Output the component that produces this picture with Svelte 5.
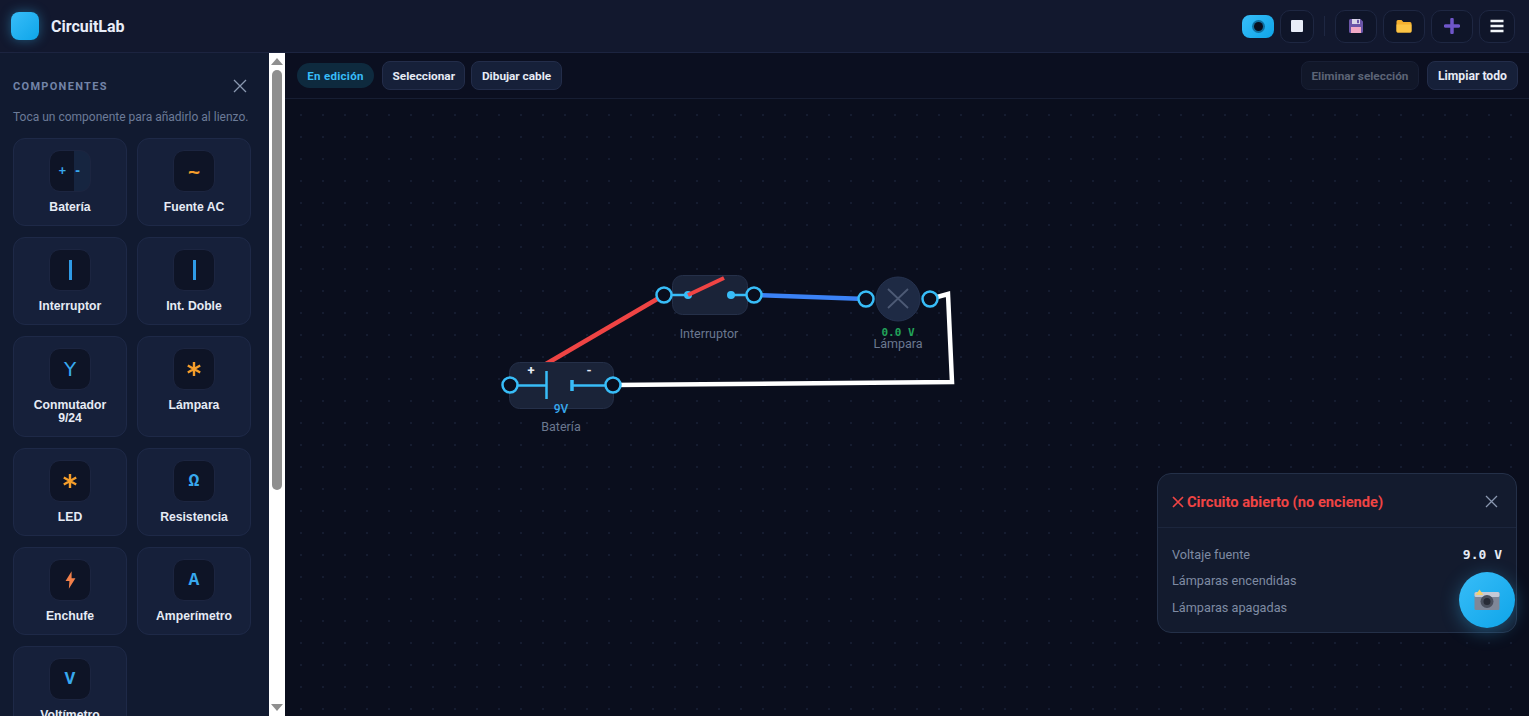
<script lang="ts">
  const components = [
    { name: 'Batería', glyph: 'battery' },
    { name: 'Fuente AC', glyph: '~', tone: 'amber' },
    { name: 'Interruptor', glyph: 'bar' },
    { name: 'Int. Doble', glyph: 'bar' },
    { name: 'Conmutador 9/24', glyph: 'Y', tone: 'blue', wide: true },
    { name: 'Lámpara', glyph: 'star' },
    { name: 'LED', glyph: 'star' },
    { name: 'Resistencia', glyph: 'Ω', tone: 'blue' },
    { name: 'Enchufe', glyph: 'bolt' },
    { name: 'Amperímetro', glyph: 'A', tone: 'blue' },
    { name: 'Voltímetro', glyph: 'V', tone: 'blue' },
  ];

  const terminals = [
    [379, 196], [469, 196], [581, 200], [645, 200], [225, 286], [328, 286],
  ];
</script>

<div class="app">
  <header class="topbar">
    <div class="brand">
      <span class="logo"></span>
      <span class="brand-name">CircuitLab</span>
    </div>
    <div class="actions">
      <button class="mode-toggle" aria-label="Modo"><span class="lens"></span></button>
      <button class="icon-btn stop" aria-label="Detener"><span class="square"></span></button>
      <span class="divider"></span>
      <button class="icon-btn wide" aria-label="Guardar">
        <svg width="16" height="16" viewBox="0 0 16 16">
          <path d="M1 2.500A1.500 1.500 0 0 1 2.500 1h10L15 3.500v10a1.500 1.500 0 0 1-1.500 1.500h-11A1.500 1.500 0 0 1 1 13.500z" fill="#6b55a8" />
          <rect x="4" y="1" width="8" height="5" fill="#d9d6e8" />
          <rect x="9" y="1.800" width="2" height="3.400" fill="#6b55a8" />
          <rect x="3" y="9" width="10" height="6" fill="#f2a9c6" />
        </svg>
      </button>
      <button class="icon-btn wide" aria-label="Abrir">
        <svg width="18" height="18" viewBox="0 0 18 18">
          <path d="M1.500 4.500A1.500 1.500 0 0 1 3 3h3.500l1.800 2H15a1.500 1.500 0 0 1 1.500 1.500V14a1.500 1.500 0 0 1-1.500 1.500H3A1.500 1.500 0 0 1 1.500 14z" fill="#f5b02f" />
          <path d="M1.500 7.500h15V14a1.500 1.500 0 0 1-1.500 1.500H3A1.500 1.500 0 0 1 1.500 14z" fill="#fcc445" />
        </svg>
      </button>
      <button class="icon-btn wide" aria-label="Nuevo">
        <svg width="16" height="16" viewBox="0 0 16 16">
          <path d="M8 1.500v13M1.500 8h13" stroke="#6f56c9" stroke-width="3.500" stroke-linecap="round" />
        </svg>
      </button>
      <button class="icon-btn menu" aria-label="Menú">
        <svg width="14" height="14" viewBox="0 0 14 14">
          <path d="M0.500 2h13M0.500 7h13M0.500 12h13" stroke="#f1f5f9" stroke-width="2.300" />
        </svg>
      </button>
    </div>
  </header>

  <div class="workspace">
    <aside class="sidebar">
      <div class="side-head">
        <h2>COMPONENTES</h2>
        <svg width="14" height="14" viewBox="0 0 14 14">
          <path d="M1 1l12 12M13 1L1 13" stroke="#8a97b0" stroke-width="1.300" />
        </svg>
      </div>
      <p class="hint">Toca un componente para añadirlo al lienzo.</p>
      <div class="cards">
        {#each components as c}
          <button class="card">
            <span class="card-icon" class:split={c.glyph === 'battery'}>
              {#if c.glyph === 'battery'}
                <span class="plus-minus">+</span><span class="plus-minus">-</span>
              {:else if c.glyph === 'bar'}
                <span class="bar"></span>
              {:else if c.glyph === 'star'}
                <svg width="16" height="16" viewBox="0 0 16 16">
                  <path d="M8 1v14M1.800 4.500l12.400 7M14.200 4.500l-12.400 7" stroke="#f59e2b" stroke-width="2.400" />
                </svg>
              {:else if c.glyph === 'bolt'}
                <svg width="11" height="18" viewBox="0 0 10 16">
                  <path d="M6 0L0.500 9H4L3.500 16L9.500 6.500H6z" fill="#f2804a" />
                </svg>
              {:else}
                <span class="glyph {c.tone}" class:tall={c.glyph === 'Y'}>{c.glyph}</span>
              {/if}
            </span>
            <span class="card-label" class:narrow={c.wide}>{c.name}</span>
          </button>
        {/each}
      </div>
    </aside>
    <div class="scrollbar">
      <span class="arrow up"></span>
      <span class="thumb"></span>
      <span class="arrow down"></span>
    </div>

    <main class="stage">
      <div class="toolbar">
        <div class="tool-group">
          <span class="status-pill">En edición</span>
          <button class="tool-btn">Seleccionar</button>
          <button class="tool-btn">Dibujar cable</button>
        </div>
        <div class="tool-group end">
          <button class="tool-btn disabled" disabled>Eliminar selección</button>
          <button class="tool-btn clear">Limpiar todo</button>
        </div>
      </div>

      <div class="canvas">
        <!-- origin of the drawing is the canvas corner: page x-285, y-99 -->
        <svg class="wires" width="1244" height="617" viewBox="0 0 1244 617">
          <path d="M379 196L225 286" stroke="#ef4444" stroke-width="4.500" fill="none" />
          <path d="M469 196L581 200" stroke="#3b82f6" stroke-width="4.500" fill="none" />
          <path d="M328 286L667 283L663 195L645 200" stroke="#ffffff" stroke-width="4.500" fill="none" />

          <rect x="224.500" y="263.500" width="104" height="46" rx="10" fill="#1a2338" stroke="#253049" />
          <path d="M225 286.500H261.500M261.500 272V300" stroke="#38bdf8" stroke-width="2.500" fill="none" />
          <path d="M328 286.500H287" stroke="#38bdf8" stroke-width="2.500" fill="none" />
          <path d="M287 281V292" stroke="#38bdf8" stroke-width="3.500" fill="none" />
          <text x="246" y="276" class="sign">+</text>
          <text x="304" y="276" class="sign">-</text>
          <text x="276" y="314" class="volts">9V</text>
          <text x="276" y="332" class="node-label">Batería</text>

          <rect x="387.500" y="176.500" width="75" height="39" rx="10" fill="#1a2338" stroke="#253049" />
          <path d="M379 196H403M446 196H469" stroke="#38bdf8" stroke-width="2.500" fill="none" />
          <circle cx="403" cy="196" r="4" fill="#38bdf8" />
          <circle cx="446" cy="196" r="4" fill="#38bdf8" />
          <path d="M403 196L439 179" stroke="#ef4444" stroke-width="4" fill="none" />
          <text x="424" y="239" class="node-label">Interruptor</text>

          <circle cx="613" cy="200" r="22" fill="#1e2a44" stroke="#263350" />
          <path d="M603 190L623 209M623 190L603 209" stroke="#4d5a75" stroke-width="1.800" fill="none" />
          <text x="613" y="237" class="lamp-volts">0.0 V</text>
          <text x="613" y="249" class="node-label">Lámpara</text>

          {#each terminals as [cx, cy]}
            <circle {cx} {cy} r="7.500" fill="#0a0e1d" stroke="#38bdf8" stroke-width="2.500" />
          {/each}
        </svg>

        <section class="status-panel">
          <div class="panel-head">
            <h3>
              <svg width="12" height="12" viewBox="0 0 12 12">
                <path d="M1 1l10 10M11 1L1 11" stroke="#ef4444" stroke-width="1.700" />
              </svg>
              Circuito abierto (no enciende)
            </h3>
            <svg width="13" height="13" viewBox="0 0 13 13">
              <path d="M1 1l11 11M12 1L1 12" stroke="#8a97b0" stroke-width="1.300" />
            </svg>
          </div>
          <dl class="panel-body">
            <div class="row"><dt>Voltaje fuente</dt><dd>9.0 V</dd></div>
            <div class="row"><dt>Lámparas encendidas</dt><dd>0</dd></div>
            <div class="row"><dt>Lámparas apagadas</dt><dd>1</dd></div>
          </dl>
        </section>

        <button class="fab" aria-label="Captura">
          <svg width="26" height="22" viewBox="0 0 26 22">
            <rect x="0.500" y="3" width="25" height="18" rx="1.500" fill="#7f8798" />
            <rect x="0.500" y="3" width="25" height="5" rx="1.500" fill="#c5cad6" />
            <path d="M1.500 6L5.500 0.500L9.500 6z" fill="#f3cf6e" />
            <circle cx="13" cy="12.500" r="6.500" fill="#4a505e" />
            <circle cx="13" cy="12.500" r="3.500" fill="#272b36" />
          </svg>
        </button>
      </div>
    </main>
  </div>
</div>

<style>
  :global(body) {
    margin: 0;
    background: #0a0e1d;
    font-family: Roboto, "Liberation Sans", sans-serif;
    overflow: hidden;
  }
  button {
    padding: 0;
    border: none;
    cursor: pointer;
  }
  .app {
    height: 716px;
    display: flex;
    flex-direction: column;
  }

  .topbar {
    height: 53px;
    box-sizing: border-box;
    flex: none;
    display: flex;
    align-items: center;
    justify-content: space-between;
    padding: 0 14px 0 11px;
    background: #12182e;
    border-bottom: 1px solid #1c2440;
  }
  .brand {
    display: flex;
    align-items: center;
    gap: 12px;
  }
  .logo {
    width: 28px;
    height: 28px;
    border-radius: 8px;
    background: linear-gradient(135deg, #38bdf8, #0ea5e9);
    box-shadow: 0 0 12px rgba(56, 189, 248, 0.4);
  }
  .brand-name {
    font-size: 16px;
    font-weight: 700;
    color: #e8edf8;
  }
  .actions {
    display: flex;
    align-items: center;
    gap: 6px;
  }
  .mode-toggle {
    width: 32px;
    height: 23px;
    border-radius: 8px;
    background: linear-gradient(135deg, #38bdf8, #0ea5e9);
    display: flex;
    align-items: center;
    justify-content: center;
  }
  .lens {
    width: 9px;
    height: 9px;
    border-radius: 50%;
    background: #0a0e1d;
    box-shadow: 0 0 0 2px #0f6f9f;
  }
  .icon-btn {
    height: 33px;
    border-radius: 10px;
    background: #0f1529;
    border: 1px solid #1e2742;
    display: flex;
    align-items: center;
    justify-content: center;
  }
  .stop {
    width: 34px;
  }
  .square {
    width: 12px;
    height: 12px;
    border-radius: 1px;
    background: #e8edf8;
  }
  .wide {
    width: 42px;
  }
  .menu {
    width: 36px;
  }
  .divider {
    width: 1px;
    height: 20px;
    margin: 0 4px;
    background: #1e2742;
  }

  .workspace {
    flex: 1;
    min-height: 0;
    display: flex;
  }
  .sidebar {
    width: 269px;
    flex: none;
    box-sizing: border-box;
    padding: 0 0 0 13px;
    overflow: hidden;
    background: #111a30;
  }
  .scrollbar {
    width: 16px;
    flex: none;
    display: flex;
    flex-direction: column;
    align-items: center;
    background: #ffffff;
  }
  .arrow {
    width: 0;
    height: 0;
    border-left: 6px solid transparent;
    border-right: 6px solid transparent;
  }
  .up {
    margin-top: 5px;
    border-bottom: 7px solid #8f8f8f;
  }
  .down {
    margin-top: auto;
    margin-bottom: 5px;
    border-top: 7px solid #8f8f8f;
  }
  .thumb {
    width: 10px;
    height: 420px;
    margin-top: 5px;
    border-radius: 5px;
    background: #8f8f8f;
  }
  .side-head {
    display: flex;
    align-items: center;
    justify-content: space-between;
    height: 16px;
    margin-top: 25px;
    padding-right: 22px;
  }
  h2 {
    margin: 0;
    font-size: 11px;
    font-weight: 700;
    letter-spacing: 1.300px;
    color: #7384a8;
  }
  .hint {
    margin: 15px 0 13px;
    font-size: 12px;
    line-height: 16px;
    color: #6c7b98;
    white-space: nowrap;
  }
  .cards {
    display: grid;
    grid-template-columns: 114px 114px;
    column-gap: 10px;
    row-gap: 11px;
    align-items: start;
  }
  .card {
    box-sizing: border-box;
    padding: 11px 4px 11px;
    display: flex;
    flex-direction: column;
    align-items: center;
    gap: 9px;
    align-self: stretch;
    border: 1px solid #1e2947;
    border-radius: 12px;
    background: #16203a;
    font-family: "Liberation Sans", Arial, sans-serif;
  }
  .card-icon {
    box-sizing: border-box;
    width: 42px;
    height: 42px;
    flex: none;
    display: flex;
    align-items: center;
    justify-content: center;
    border: 1px solid #1c2540;
    border-radius: 11px;
    background: #0e1426;
  }
  .split {
    gap: 8px;
    background: linear-gradient(90deg, #0e1426 60%, #162540 60%);
  }
  .plus-minus {
    font: 700 12px "DejaVu Sans Mono", monospace;
    color: #38a9ee;
  }
  .bar {
    width: 3px;
    height: 20px;
    background: #2f9be6;
  }
  .glyph {
    font: 700 18px "Liberation Mono", monospace;
  }
  .glyph.tall {
    font: 400 20px "DejaVu Sans", sans-serif;
  }
  .glyph.blue {
    color: #38a9ee;
  }
  .glyph.amber {
    font: 700 20px "DejaVu Sans Mono", monospace;
    color: #f59e2b;
  }
  .card-label {
    font-size: 12.200px;
    line-height: 13px;
    font-weight: 700;
    color: #e6ebf5;
    text-align: center;
  }
  .narrow {
    width: 80px;
  }

  .stage {
    flex: 1;
    min-width: 0;
    display: flex;
    flex-direction: column;
    background: #0a0e1d;
  }
  .toolbar {
    height: 46px;
    box-sizing: border-box;
    flex: none;
    display: flex;
    align-items: center;
    justify-content: space-between;
    padding: 0 11px 0 12px;
    background: #0b0f20;
    border-bottom: 1px solid #171e33;
  }
  .tool-group {
    display: flex;
    align-items: center;
    gap: 6px;
  }
  .tool-group.end {
    gap: 8px;
  }
  .status-pill {
    box-sizing: border-box;
    width: 77px;
    height: 25px;
    margin-right: 2px;
    display: flex;
    align-items: center;
    justify-content: center;
    border-radius: 13px;
    background: #0e2a3e;
    font-size: 11.500px;
    font-weight: 700;
    letter-spacing: 0.300px;
    color: #38bdf8;
  }
  .tool-btn {
    box-sizing: border-box;
    height: 29px;
    padding: 0 9.500px;
    border: 1px solid #232d4a;
    border-radius: 8px;
    background: #162039;
    font-family: Roboto, "Liberation Sans", sans-serif;
    font-size: 11.800px;
    font-weight: 700;
    color: #e6ebf5;
  }
  .tool-btn.clear {
    padding: 0 10px;
    font-size: 12.200px;
  }
  .disabled {
    color: #5c6476;
    background: #111729;
    border-color: #181f34;
  }

  .canvas {
    position: relative;
    flex: 1;
    min-height: 0;
    overflow: hidden;
    background-image: radial-gradient(#151c30 1px, transparent 1.200px);
    background-size: 22px 22px;
    background-position: 5px 5px;
  }
  .wires {
    position: absolute;
    left: 0;
    top: 0;
  }
  .sign {
    font: 700 13px Roboto, sans-serif;
    fill: #e6ebf5;
    text-anchor: middle;
  }
  .volts {
    font: 500 12px Roboto, sans-serif;
    fill: #38a9ee;
    text-anchor: middle;
  }
  .node-label {
    font: 400 12.500px Roboto, sans-serif;
    fill: #6b7890;
    text-anchor: middle;
  }
  .lamp-volts {
    font: 700 11px "DejaVu Sans Mono", monospace;
    fill: #22a35a;
    text-anchor: middle;
  }

  .status-panel {
    position: absolute;
    left: 872px;
    top: 374px;
    box-sizing: border-box;
    width: 360px;
    height: 160px;
    border: 1px solid #243048;
    border-radius: 14px;
    background: #131b2e;
  }
  .panel-head {
    height: 54px;
    box-sizing: border-box;
    display: flex;
    align-items: center;
    justify-content: space-between;
    padding: 2px 18px 0 14px;
    border-bottom: 1px solid #1c263d;
  }
  h3 {
    margin: 0;
    display: flex;
    align-items: center;
    gap: 3px;
    font-size: 14.700px;
    font-weight: 700;
    color: #ef4444;
  }
  .panel-body {
    margin: 0;
    padding: 17px 14px 0;
    display: flex;
    flex-direction: column;
    gap: 8px;
  }
  .row {
    display: flex;
    justify-content: space-between;
    align-items: center;
    height: 18.500px;
  }
  dt {
    font-size: 12.700px;
    color: #7f8ba3;
  }
  dd {
    margin: 0;
    font: 700 13px "DejaVu Sans Mono", monospace;
    color: #e6ebf5;
  }
  .fab {
    position: absolute;
    left: 1174px;
    top: 473px;
    width: 56px;
    height: 56px;
    display: flex;
    align-items: center;
    justify-content: center;
    border-radius: 50%;
    background: linear-gradient(135deg, #38bdf8, #0ea5e9);
    box-shadow: 0 4px 18px rgba(56, 189, 248, 0.35);
  }
</style>
